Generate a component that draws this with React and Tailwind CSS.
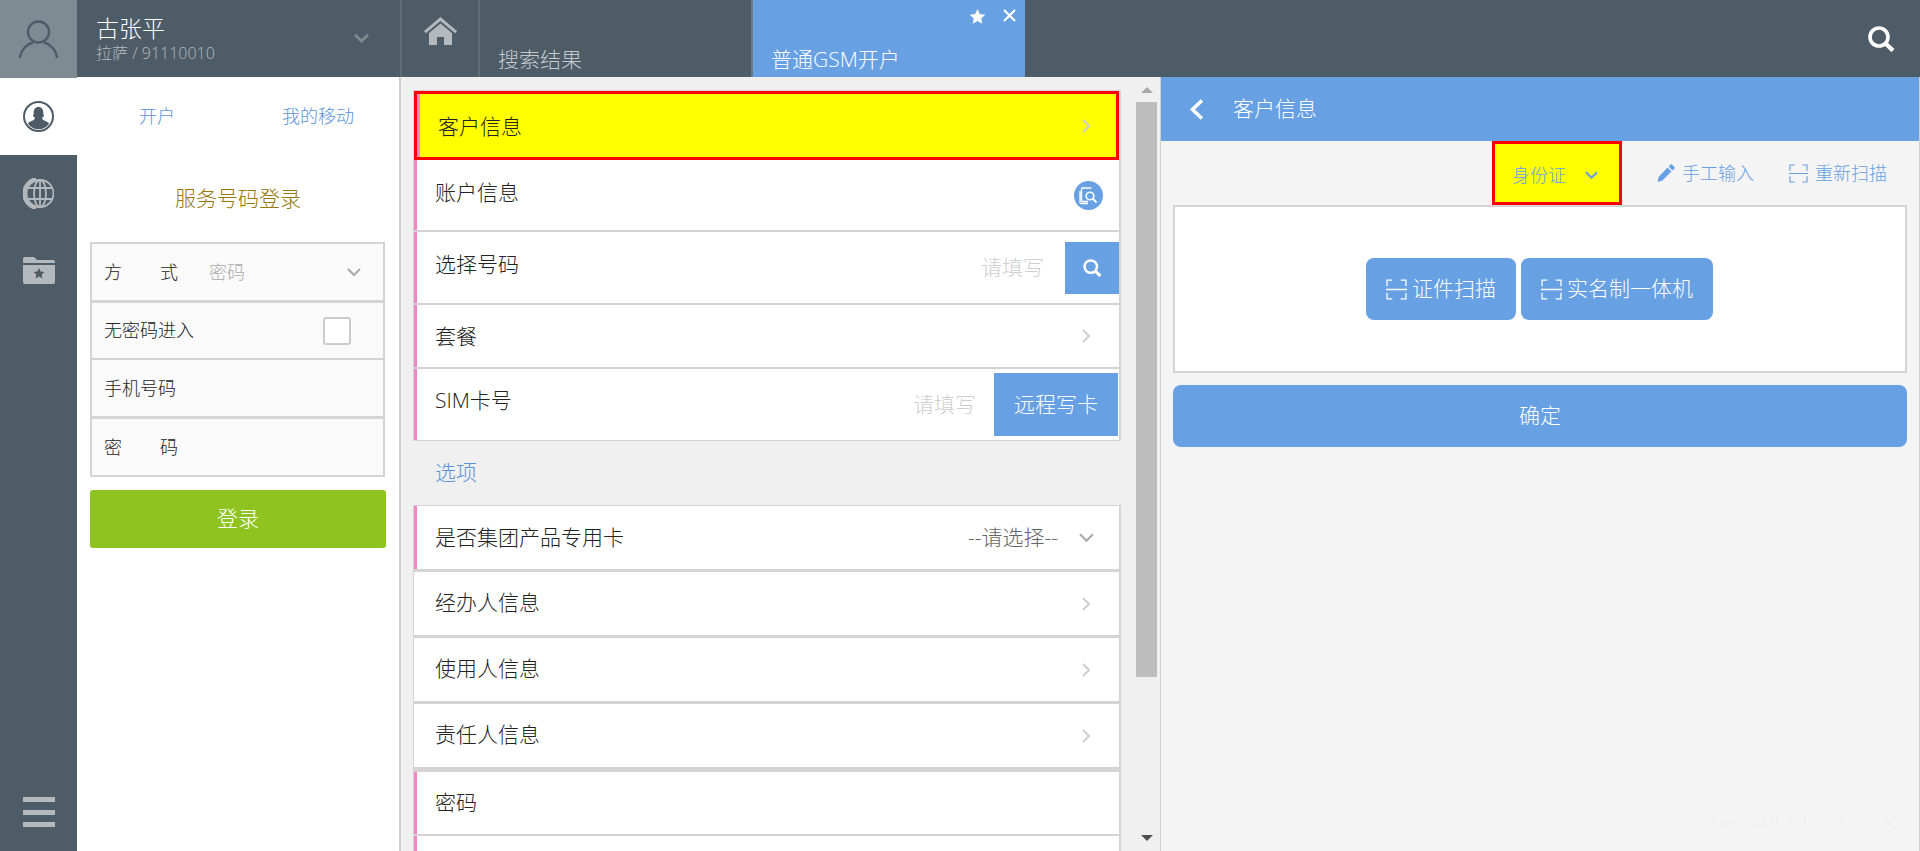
const ScanIcon = ({ className }) => (
  <svg viewBox="0 0 20 20" fill="none" stroke="currentColor" strokeWidth="1.2" className={className}>
    <path d="M1 7V1h5M14 1h5v6M0 10h20M1 13v6h5M14 19h5v-6" />
  </svg>
);

// chevrons are sized off the reference, lucide's are too small and thin
const ChevronDownIcon = ({ className, strokeWidth = 2 }) => (
  <svg viewBox="0 0 14 9" fill="none" stroke="currentColor" strokeWidth={strokeWidth} className={className}>
    <path d="m1 1 6 6 6-6" />
  </svg>
);

const ChevronRightIcon = ({ className, strokeWidth = 2 }) => (
  <svg viewBox="0 0 8 14" fill="none" stroke="currentColor" strokeWidth={strokeWidth} className={className}>
    <path d="m1 1 6 6-6 6" />
  </svg>
);

const ChevronLeftIcon = () => (
  <svg viewBox="0 0 15 21" className="h-[21px] w-[15px]" fill="none" stroke="#fff" strokeWidth="3.6">
    <path d="M13 1.500 3.500 10.500l9.500 9" />
  </svg>
);

const SearchIcon = ({ className }) => (
  <svg viewBox="0 0 27 26" fill="none" stroke="#fff" className={className}>
    <circle cx="11" cy="11" r="9" strokeWidth="3.6" />
    <path d="m17.500 17.500 7.500 7" strokeWidth="4.400" />
  </svg>
);

const HomeIcon = () => (
  <svg viewBox="0 0 33 28" className="h-[28px] w-[33px]" fill="#b4b9bd">
    <path d="M16.5 0 33 14l-1.8 2.2L16.5 4 1.8 16.2 0 14z" />
    <path d="M16.5 6.5 28 16v12h-8v-8h-7v8H5V16z" />
  </svg>
);

const AvatarIcon = () => (
  <svg viewBox="0 0 39 38" className="h-[38px] w-[39px]" fill="none" stroke="#4d5c66" strokeWidth="2.4">
    <circle cx="19.5" cy="12" r="10.5" />
    <path d="M1 38c1-9 8-14.500 13-15.500M38 38c-1-9-8-14.500-13-15.500" />
  </svg>
);

const UserCircleIcon = () => (
  <svg viewBox="0 0 31 31" className="h-[31px] w-[31px]">
    <circle cx="15.500" cy="15.500" r="14.500" fill="none" stroke="#4d5c66" strokeWidth="2" />
    <path
      d="M15.500 6c3 0 4.800 2.200 4.800 5.500 0 1.500.3 2.200.6 3 .2 1-.6 1.800-1.700 2-.2 1 .1 2 1 2.500 2 1 5 2 6 3.500a12.800 12.800 0 0 1-21.400 0c1-1.500 4-2.500 6-3.500.9-.5 1.200-1.500 1-2.500-1.100-.2-1.900-1-1.700-2 .3-.8.600-1.500.6-3C10.700 8.200 12.500 6 15.500 6z"
      fill="#4d5c66"
    />
  </svg>
);

const GlobeIcon = () => (
  <svg viewBox="0 0 31 31" className="h-[31px] w-[31px]" fill="none" stroke="#b4b9bd" strokeWidth="1.800">
    <path d="M13 .8A15 15 0 0 0 13 30.200" strokeWidth="3.500" />
    <circle cx="17" cy="15.500" r="13.500" />
    <ellipse cx="17" cy="15.500" rx="6" ry="13.500" />
    <path d="M17 2v27M4.500 10h25M4.500 21h25" />
  </svg>
);

const FolderStarIcon = () => (
  <svg viewBox="0 0 32 27" className="h-[27px] w-[32px]">
    <path d="M0 2a2 2 0 0 1 2-2h9l3 3h16a2 2 0 0 1 2 2v1H0z" fill="#b4b9bd" />
    <path d="M0 8h32v17a2 2 0 0 1-2 2H2a2 2 0 0 1-2-2z" fill="#b4b9bd" />
    <path d="m16 11 1.700 3.500 3.800.5-2.800 2.600.7 3.800-3.400-1.800-3.400 1.800.7-3.800-2.800-2.600 3.800-.5z" fill="#4d5c66" />
  </svg>
);

const DocSearchIcon = () => (
  <div className="flex h-[29px] w-[29px] items-center justify-center rounded-full bg-[#67a0e3]">
    <svg viewBox="0 0 19 19" className="h-[19px] w-[19px]" fill="none" stroke="#fff" strokeWidth="1.300">
      <path d="M9 15.500H3.500a1 1 0 0 1-1-1V3a1 1 0 0 1 1-1h9M1 5v11.500a1 1 0 0 0 1 1h7" />
      <circle cx="11" cy="10" r="3.800" strokeWidth="1.600" />
      <path d="m13.800 12.800 3.700 3.700" strokeWidth="2" />
    </svg>
  </div>
);

const PencilIcon = () => (
  <svg viewBox="0 0 18 18" className="h-[18px] w-[18px]" fill="#67a0e3">
    <path d="M13.300.8a1.500 1.500 0 0 1 2 0l1.900 1.900a1.500 1.500 0 0 1 0 2L15.500 6.400 11.600 2.500zM10.500 3.600l3.900 3.900-8.900 8.900L.6 18l1-5z" />
  </svg>
);

const StarIcon = () => (
  <svg viewBox="0 0 17 16" className="h-[15px] w-[17px]" fill="#fff">
    <path d="m8.500 0 2.500 5.300 5.800.7-4.300 4 1.100 5.700-5.100-2.800-5.100 2.800 1.100-5.700-4.300-4 5.800-.7z" />
  </svg>
);

const RowChevron = () => <ChevronRightIcon className="h-[14px] w-[8px] text-[#cfcfcf]" />;

function Row({ label, pink, className, labelClass = 'mb-[3px]', children }) {
  return (
    <div className={`flex flex-none items-center bg-white pl-[18px] ${pink ? 'border-l-[3px] border-l-[#f884c6]' : 'border-l-[3px] border-l-white'} ${className}`}>
      <span className={`text-[21px] leading-[28px] text-[#222] ${labelClass}`}>{label}</span>
      <div className="ml-auto flex items-center">{children}</div>
    </div>
  );
}

const FormLabel = ({ chars }) => (
  <span className="flex w-[74px] justify-between text-[18px] text-[#222]">
    {chars.map((c) => (
      <span key={c}>{c}</span>
    ))}
  </span>
);

export default function App() {
  return (
    <div className="flex h-[851px] w-[1920px] flex-col overflow-hidden bg-[#f0f0f0] font-['Open_Sans','Noto_Sans_CJK_SC',sans-serif] font-light">
      <header className="z-10 flex h-[77px] flex-none items-start bg-[#4d5c66]">
        <div className="flex h-[78px] w-[77px] flex-none items-center justify-center bg-[#7f8b93]">
          <AvatarIcon />
        </div>
        <div className="flex h-[77px] w-[325px] flex-none items-center border-r-[2px] border-r-[#5f6d76] pl-[19px] pr-[31px]">
          <div className="flex flex-col">
            <span className="text-[23px] leading-[28px] text-white">古张平</span>
            <span className="text-[16px] leading-[22px] text-[#b5babe]">拉萨 / 91110010</span>
          </div>
          <ChevronDownIcon className="ml-auto h-[11px] w-[15px] text-[#7d8a92]" strokeWidth={2.6} />
        </div>
        <div className="flex h-[77px] w-[78px] flex-none items-center justify-center border-r-[2px] border-r-[#5f6d76] pb-[15px]">
          <HomeIcon />
        </div>
        <div className="flex h-[77px] w-[273px] flex-none items-end border-r-[2px] border-r-[#6c7a84] pb-[4px] pl-[18px] text-[21px] leading-[28px] text-[#c5c9cc]">
          搜索结果
        </div>
        <div className="flex h-[77px] w-[272px] flex-none flex-col bg-[#67a0e3] pb-[4px] pl-[18px] pr-[9px] text-[21px] leading-[28px] text-white">
          <div className="flex h-[10px] items-start justify-end gap-[17px] pt-[9px]">
            <StarIcon />
            <svg viewBox="0 0 13 13" className="h-[13px] w-[13px]" fill="none" stroke="#fff" strokeWidth="2.200">
              <path d="m1 1 11 11M12 1 1 12" />
            </svg>
          </div>
          <span className="mt-auto">普通GSM开户</span>
        </div>
        <div className="ml-auto flex h-[77px] items-center pr-[25px]">
          <SearchIcon className="h-[26px] w-[27px]" />
        </div>
      </header>

      <div className="flex min-h-0 flex-1">
        <nav className="flex w-[77px] flex-none flex-col items-center bg-[#4d5c66]">
          <div className="flex h-[78px] w-full items-center justify-center bg-white">
            <UserCircleIcon />
          </div>
          <div className="flex h-[77px] items-center justify-center">
            <GlobeIcon />
          </div>
          <div className="flex h-[77px] items-center justify-center">
            <FolderStarIcon />
          </div>
          <div className="mb-[24px] mt-auto flex w-[32px] flex-col">
            <div className="h-[5px] bg-[#b4b9bd]" />
            <div className="mt-[8px] h-[5px] bg-[#b4b9bd]" />
            <div className="mt-[7px] h-[5px] bg-[#b4b9bd]" />
          </div>
        </nav>

        <aside className="flex w-[324px] flex-none flex-col border-r-[2px] border-r-[#cfcfcf] bg-white pl-[13px]">
          <div className="flex h-[78px] items-center text-[18px] text-[#5b93d8]">
            <span className="ml-[49px]">开户</span>
            <span className="ml-[107px]">我的移动</span>
          </div>
          <div className="flex h-[87px] w-[296px] items-center justify-center text-[21px] text-[#97780c]">
            服务号码登录
          </div>
          <div className="flex w-[295px] flex-col border-[2px] border-[#d4d4d4] bg-[#fafafa]">
            <div className="flex h-[59px] items-center border-b-[3px] border-b-[#d4d4d4] pl-[12px] pr-[22px]">
              <FormLabel chars={['方', '式']} />
              <span className="ml-[31px] text-[18px] text-[#aaa]">密码</span>
              <ChevronDownIcon className="ml-auto h-[9px] w-[14px] text-[#aaa]" />
            </div>
            <div className="flex h-[57px] items-center border-b-[2px] border-b-[#d4d4d4] pl-[12px] pr-[32px]">
              <span className="text-[18px] text-[#222]">无密码进入</span>
              <div className="ml-auto h-[28px] w-[28px] rounded-[3px] border-[2px] border-[#ccc] bg-white" />
            </div>
            <div className="flex h-[59px] items-center border-b-[3px] border-b-[#d4d4d4] pl-[12px]">
              <span className="text-[18px] text-[#222]">手机号码</span>
            </div>
            <div className="flex h-[56px] items-center pl-[12px]">
              <FormLabel chars={['密', '码']} />
            </div>
          </div>
          <button type="button" className="mt-[13px] h-[58px] w-[296px] rounded-[3px] bg-[#8fc31f] text-[21px] text-white">
            登录
          </button>
        </aside>

        <main className="flex w-[759px] flex-none overflow-hidden bg-[#f0f0f0]">
          <div className="ml-[12px] flex w-[708px] flex-none flex-col pt-[13px]">
            <div className="flex flex-none flex-col border-x-[1px] border-t-[1px] border-b-[1px] border-r-[2px] border-[#d4d4d4] bg-[#d4d4d4]">
              <div className="flex h-[69px] flex-none items-center border-[3px] border-[#ff0000] bg-[#ffff00]">
                <div className="flex h-full flex-1 items-center border-l-[3px] border-l-[#f884c6] pl-[18px] pr-[26px]">
                  <span className="mt-[1px] text-[21px] leading-[28px] text-[#222]">客户信息</span>
                  <ChevronRightIcon className="ml-auto h-[14px] w-[8px] text-[#cfcfcf]" />
                </div>
              </div>
              <Row label="账户信息" pink className="h-[70px] pr-[16px]" labelClass="mb-[7px]">
                <DocSearchIcon />
              </Row>
              <Row label="选择号码" pink className="mt-[2px] h-[71px]" labelClass="mb-[8px]">
                <span className="mr-[21px] text-[21px] text-[#cfcfcf]">请填写</span>
                <div className="flex h-[52px] w-[54px] items-center justify-center bg-[#67a0e3]">
                  <SearchIcon className="h-[18px] w-[19px]" />
                </div>
              </Row>
              <Row label="套餐" pink className="mt-[2px] h-[62px] pr-[29px]" labelClass="mb-[1px]">
                <RowChevron />
              </Row>
              <Row label="SIM卡号" pink className="mt-[2px] h-[71px] pr-[1px]" labelClass="mb-[9px]">
                <span className="mr-[18px] text-[21px] text-[#cfcfcf]">请填写</span>
                <div className="flex h-[63px] w-[124px] items-center justify-center bg-[#67a0e3] text-[21px] text-white">
                  远程写卡
                </div>
              </Row>
            </div>
            <div className="flex h-[64px] flex-none items-center pl-[22px] text-[21px] text-[#5b93d8]">选项</div>
            <div className="flex flex-none flex-col border-x-[1px] border-t-[1px] border-r-[2px] border-[#d4d4d4] bg-[#d4d4d4]">
              <Row label="是否集团产品专用卡" pink className="h-[63px] pr-[25px]" labelClass="mb-[1px]">
                <span className="mr-[21px] text-[21px] text-[#666]">--请选择--</span>
                <ChevronDownIcon className="h-[10px] w-[15px] text-[#aaa]" />
              </Row>
              <Row label="经办人信息" className="mt-[3px] h-[63px] pr-[29px]">
                <RowChevron />
              </Row>
              <Row label="使用人信息" className="mt-[3px] h-[63px] pr-[29px]">
                <RowChevron />
              </Row>
              <Row label="责任人信息" className="mt-[3px] h-[63px] pr-[29px]">
                <RowChevron />
              </Row>
              <Row label="密码" pink className="mt-[5px] h-[62px]" />
              <Row label="" pink className="mt-[2px] h-[40px]" />
            </div>
          </div>

          <div className="ml-[15px] flex w-[21px] flex-none flex-col items-center bg-[#f0f0f0]">
            <div className="mt-[10px] h-0 w-0 flex-none border-x-[6px] border-b-[6px] border-x-transparent border-b-[#a8a8a8]" />
            <div className="mt-[9px] h-[575px] w-full flex-none bg-[#bdbdbd]" />
            <div className="mt-[158px] h-0 w-0 flex-none border-x-[6px] border-t-[6px] border-x-transparent border-t-[#505050]" />
          </div>
        </main>

        <section className="relative flex flex-1 flex-col border-x-[1px] border-x-[#cfcfcf] bg-[#f4f4f4]">
          <div className="flex h-[64px] flex-none items-center bg-[#67a0e3] pl-[28px] text-[21px] text-white">
            <ChevronLeftIcon />
            <span className="ml-[29px]">客户信息</span>
          </div>
          <div className="flex h-[64px] flex-none items-center text-[18px] text-[#67a0e3]">
            <div className="ml-[331px] flex h-[64px] w-[130px] items-center border-[3px] border-[#ff0000] bg-[#ffff00] pl-[17px] pt-[5px]">
              <span>身份证</span>
              <ChevronDownIcon className="ml-[19px] h-[9px] w-[13px]" strokeWidth={2.2} />
            </div>
            <div className="ml-[35px] flex items-center">
              <PencilIcon />
              <span className="ml-[7px]">手工输入</span>
            </div>
            <div className="ml-[35px] flex items-center">
              <ScanIcon className="h-[19px] w-[19px]" />
              <span className="ml-[7px]">重新扫描</span>
            </div>
          </div>
          <div className="mx-[12px] flex h-[168px] flex-none items-center justify-center gap-[5px] border-[2px] border-[#d4d4d4] bg-white pr-[1px]">
            <button type="button" className="flex h-[62px] w-[150px] items-center justify-center gap-[5px] rounded-[8px] bg-[#67a0e3] text-[21px] text-white">
              <ScanIcon className="h-[21px] w-[21px]" />
              证件扫描
            </button>
            <button type="button" className="flex h-[62px] w-[192px] items-center justify-center gap-[5px] rounded-[8px] bg-[#67a0e3] text-[21px] text-white">
              <ScanIcon className="h-[21px] w-[21px]" />
              实名制一体机
            </button>
          </div>
          <button type="button" className="mx-[12px] mt-[12px] h-[62px] flex-none rounded-[8px] bg-[#67a0e3] text-[21px] text-white">
            确定
          </button>
          <span className="absolute bottom-[15px] right-[17px] text-[19px] text-[#f0f0f0]">TouchUI 1.1.20180612</span>
        </section>
      </div>
    </div>
  );
}
